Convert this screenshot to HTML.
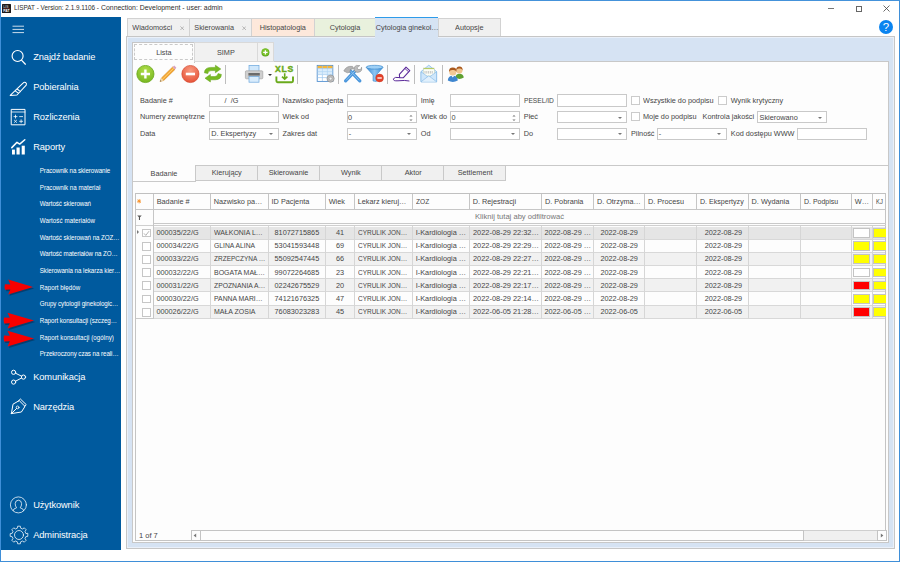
<!DOCTYPE html>
<html lang="pl">
<head>
<meta charset="utf-8">
<title>LISPAT</title>
<style>
*{box-sizing:border-box;margin:0;padding:0}
html,body{width:900px;height:562px;overflow:hidden;background:#fff}
body{font-family:"Liberation Sans",sans-serif;font-size:7.3px;color:#454545;position:relative}
div,span,svg{position:absolute}
.t{white-space:nowrap;line-height:10px;height:10px}
#side{left:1px;top:17px;width:120.4px;height:532.6px;background:#005a9e}
.mi{left:33.2px;color:#fff;font-size:9.3px;letter-spacing:-0.1px;line-height:12px;height:12px;white-space:nowrap}
.si{left:39.8px;color:#fff;font-size:6.2px;letter-spacing:-0.05px;line-height:8px;height:8px;white-space:nowrap}
.tab{top:18px;height:19px;border:1px solid #d2d2d2;background:#f0f0f0}
.tab .t{top:3.9px;font-size:7.3px}
.itab{top:42.4px;height:19.2px;border:1px solid #d9d9d9;background:#f1f1f1}
.lbl{font-size:7.3px;white-space:nowrap;line-height:10px;height:10px;color:#454545}
.inp{height:12.4px;border:1px solid #c9c9c9;background:#fff;font-size:7.3px}
.inp .t{left:1.2px;top:0.6px}
.dd:after{content:"";position:absolute;right:4.2px;top:4.8px;border:2.2px solid transparent;border-top:2.4px solid #777;border-bottom:none}
.cb{width:9px;height:9px;border:1px solid #cbcbcb;background:#fff}
.stab{top:165px;height:15.6px;border:1px solid #c9c9c9;border-left:none;background:#f0f0f0}
.c,.hc,.lbl,.inp .t,.tab .t,.itab .t,.stab .t,.si{transform:scaleY(1.07)}
.hl{height:1px;background:#c9c9c9}
.vl{width:1px;background:#c9c9c9}
.hc{top:197px;font-size:7.3px;white-space:nowrap;line-height:10px;height:10px}
.row{left:153.4px;width:732px;height:13.2px}
.c{font-size:7.3px;white-space:nowrap;line-height:10px;height:10px;top:1.6px}
.sw{width:17px;height:9.6px;border:1px solid #c4c4c4}
.sep{top:65px;width:1px;height:19px;background:#bdbdbd}
</style>
</head>
<body>
<div style="left:0;top:0;width:900px;height:562px;border:1px solid #3f8fd8;border-top:1.4px solid #4492da;border-bottom:1.6px solid #3f8fd8"></div>
<div style="left:2px;top:4px;width:9px;height:9px;background:#1d1a1b;border-radius:.5px"><span class="t" style="left:1.3px;top:1px;font-size:3.4px;line-height:4px;height:4px;color:#a8a8a8;font-weight:bold">LIS</span><span style="left:0.8px;top:4.4px;width:7.4px;height:0.5px;background:#4a2222"></span><span class="t" style="left:1.3px;top:4.9px;font-size:3.4px;line-height:4px;height:4px;color:#fff;font-weight:bold">PAT</span></div>
<div class="t" style="left:13.9px;top:3.1px;font-size:6.9px;color:#2e2e2e;transform:scale(0.925,1.06);transform-origin:0 50%">LISPAT - Version: 2.1.9.1106 -</div>
<div class="t" style="left:100.9px;top:3.1px;font-size:6.9px;color:#2e2e2e;transform:scale(1.002,1.06);transform-origin:0 50%">Connection: Development - user: admin</div>
<div style="left:828px;top:8px;width:6px;height:1px;background:#777"></div>
<div style="left:856px;top:5.5px;width:6px;height:6px;border:1px solid #666"></div>
<svg style="left:883px;top:5px" width="7" height="7" viewBox="0 0 7 7"><path d="M0.5 0.5L6.5 6.5M6.5 0.5L0.5 6.5" stroke="#444" stroke-width="0.8" fill="none"/></svg>
<div style="left:879px;top:20px;width:14px;height:14px;border-radius:7px;background:#0a84f0"><span class="t" style="left:0;width:14px;top:2px;text-align:center;color:#fff;font-size:11.5px">?</span></div>
<div id="side"></div>
<svg style="left:12px;top:25px" width="13" height="9" viewBox="0 0 13 9"><path d="M0.5 1.2H12M0.5 4.4H12M0.5 7.6H12" stroke="#fff" stroke-width="0.8" fill="none"/></svg>
<div class="mi" style="top:51.4px">Znajdź badanie</div>
<div class="mi" style="top:81.4px">Pobieralnia</div>
<div class="mi" style="top:111.4px">Rozliczenia</div>
<div class="mi" style="top:141.4px">Raporty</div>
<div class="mi" style="top:371.1px">Komunikacja</div>
<div class="mi" style="top:401.1px">Narzędzia</div>
<div class="mi" style="top:499.4px">Użytkownik</div>
<div class="mi" style="top:529.4px">Administracja</div>
<div class="si" style="top:166.9px">Pracownik na skierowanie</div>
<div class="si" style="top:183.6px;letter-spacing:-0.02px">Pracownik na materiał</div>
<div class="si" style="top:200.3px">Wartość skierowań</div>
<div class="si" style="top:216.9px;letter-spacing:0.06px">Wartość materiałów</div>
<div class="si" style="top:233.6px">Wartość skierowań na ZOZ…</div>
<div class="si" style="top:250.3px">Wartość materiałów na ZO…</div>
<div class="si" style="top:267.0px">Skierowania na lekarza kier…</div>
<div class="si" style="top:283.7px;letter-spacing:0.04px">Raport błędów</div>
<div class="si" style="top:300.3px">Grupy cytologii ginekologic…</div>
<div class="si" style="top:317.0px">Raport konsultacji (szczeg…</div>
<div class="si" style="top:333.7px;letter-spacing:0.03px">Raport konsultacji (ogólny)</div>
<div class="si" style="top:350.4px">Przekroczony czas na reali…</div>
<svg style="left:10px;top:48px" width="18" height="18" viewBox="0 0 18 18" ><circle cx="7.6" cy="8" r="5.5" stroke="#fff" fill="none" stroke-linecap="round" stroke-linejoin="round" stroke-width="1.15"/><path d="M11.7 12.4L15.4 16.2" stroke="#fff" fill="none" stroke-linecap="round" stroke-linejoin="round" stroke-width="1.25"/></svg>
<svg style="left:9px;top:80px" width="19" height="17" viewBox="0 0 19 17" ><path d="M1.2 15.4L8 15 17.2 5.2Q18 3.4 16.6 2.5 15.2 1.8 14 3.2L1.2 15.4ZM6.2 10.8L9.6 13.4M8.2 9L11.4 11.6" stroke="#fff" fill="none" stroke-linecap="round" stroke-linejoin="round" stroke-width="1.05"/></svg>
<svg style="left:10px;top:108px" width="17" height="18" viewBox="0 0 17 18" ><rect x="1.6" y="1.4" width="13.4" height="15.4" stroke="#fff" fill="none" stroke-linecap="round" stroke-linejoin="round" stroke-width="1"/><path d="M1.6 4H15M4 8.6H7M5.5 7.1V10.1M9.6 8.6H12.6M4.4 12.2L6.6 14.4M6.6 12.2L4.4 14.4M9.6 13.3H12.6M11.1 11.8V14.8" stroke="#fff" fill="none" stroke-linecap="round" stroke-linejoin="round" stroke-width="0.8"/></svg>
<svg style="left:10px;top:138px" width="17" height="18" viewBox="0 0 17 18" ><path d="M1.8 9.6L7 4.3 9.7 6.1 14.8 1.8" stroke="#fff" fill="none" stroke-linecap="round" stroke-linejoin="round" stroke-width="1.5"/><rect x="2" y="11.6" width="2.9" height="4.9" fill="#fff"/><rect x="6.5" y="9.5" width="3.2" height="7" fill="#fff"/><rect x="11.7" y="7.7" width="3.1" height="8.8" fill="#fff"/></svg>
<svg style="left:10px;top:368px" width="18" height="18" viewBox="0 0 18 18" ><circle cx="3.6" cy="4.3" r="2.1" stroke="#fff" fill="none" stroke-linecap="round" stroke-linejoin="round" stroke-width="1"/><circle cx="13.5" cy="9.1" r="2.1" stroke="#fff" fill="none" stroke-linecap="round" stroke-linejoin="round" stroke-width="1"/><circle cx="3.6" cy="14.1" r="2.1" stroke="#fff" fill="none" stroke-linecap="round" stroke-linejoin="round" stroke-width="1"/><path d="M5.5 5.2L11.6 8.2M5.5 13.2L11.6 10" stroke="#fff" fill="none" stroke-linecap="round" stroke-linejoin="round" stroke-width="1"/></svg>
<svg style="left:10px;top:397px" width="18" height="19" viewBox="0 0 18 19" ><path d="M1.4 16.6L3 7.2 9.2 3.6 15 9.4 11.4 15 1.4 16.6ZM1.6 16.4L6.6 11.4M8.4 4L10.4 2 16.2 7.6 14.6 9.4" stroke="#fff" fill="none" stroke-linecap="round" stroke-linejoin="round" stroke-width="1"/><circle cx="7.6" cy="10.4" r="1.4" stroke="#fff" fill="none" stroke-linecap="round" stroke-linejoin="round" stroke-width="0.8"/></svg>
<svg style="left:9px;top:495px" width="20" height="20" viewBox="0 0 20 20" ><circle cx="9.4" cy="9.9" r="8" stroke="#fff" fill="none" stroke-linecap="round" stroke-linejoin="round" stroke-width="0.75"/><path d="M4 15.6Q4.2 13.6 7.6 12.8 6.2 11.2 6.2 8.6 6.4 5.2 9.4 5.2 12.4 5.2 12.6 8.6 12.6 11.2 11.2 12.8 14.6 13.6 14.8 15.6" stroke="#fff" fill="none" stroke-linecap="round" stroke-linejoin="round" stroke-width="0.75"/></svg>
<svg style="left:8.8px;top:525px" width="20" height="20" viewBox="0 0 20 20" ><path d="M18.80 8.67 L18.80 11.33 L16.78 11.73 L16.02 13.57 L17.16 15.28 L15.28 17.16 L13.57 16.02 L11.73 16.78 L11.33 18.80 L8.67 18.80 L8.27 16.78 L6.43 16.02 L4.72 17.16 L2.84 15.28 L3.98 13.57 L3.22 11.73 L1.20 11.33 L1.20 8.67 L3.22 8.27 L3.98 6.43 L2.84 4.72 L4.72 2.84 L6.43 3.98 L8.27 3.22 L8.67 1.20 L11.33 1.20 L11.73 3.22 L13.57 3.98 L15.28 2.84 L17.16 4.72 L16.02 6.43 L16.78 8.27Z" stroke="#fff" fill="none" stroke-linecap="round" stroke-linejoin="round" stroke-width="0.75"/><circle cx="10" cy="10" r="4.5" stroke="#fff" fill="none" stroke-linecap="round" stroke-linejoin="round" stroke-width="0.75"/></svg>
<svg style="left:3.6px;top:279.3px;overflow:visible" width="30" height="16" viewBox="0 0 30 16"><g fill="#0a2a4a" opacity=".55" transform="translate(1.2 1.4)"><path d="M1 5.2Q0 8 1 10.8L6.4 10.6 4.2 15.4 29 8 4.2 0.6 6.4 5.4Z"/></g><g fill="#f70000"><path d="M1 5.2Q0 8 1 10.8L6.4 10.6 4.2 15.4 29 8 4.2 0.6 6.4 5.4Z"/></g></svg>
<svg style="left:2.8px;top:312.2px;overflow:visible" width="32.1" height="17.12" viewBox="0 0 30 16"><g fill="#0a2a4a" opacity=".55" transform="translate(1.2 1.4)"><path d="M1 5.2Q0 8 1 10.8L6.4 10.6 4.2 15.4 29 8 4.2 0.6 6.4 5.4Z"/></g><g fill="#f70000"><path d="M1 5.2Q0 8 1 10.8L6.4 10.6 4.2 15.4 29 8 4.2 0.6 6.4 5.4Z"/></g></svg>
<svg style="left:2.8px;top:329.6px;overflow:visible" width="32.1" height="17.12" viewBox="0 0 30 16"><g fill="#0a2a4a" opacity=".55" transform="translate(1.2 1.4)"><path d="M1 5.2Q0 8 1 10.8L6.4 10.6 4.2 15.4 29 8 4.2 0.6 6.4 5.4Z"/></g><g fill="#f70000"><path d="M1 5.2Q0 8 1 10.8L6.4 10.6 4.2 15.4 29 8 4.2 0.6 6.4 5.4Z"/></g></svg>
<div class="tab" style="left:127px;width:63px;background:#f0f0f0"><span class="t" style="left:4.3px">Wiadomości</span><svg style="left:51.5px;top:6.6px" width="4.4" height="4.4" viewBox="0 0 4.4 4.4"><path d="M0.4 0.4L4 4M4 0.4L0.4 4" stroke="#8a8a8a" stroke-width="0.55"/></svg></div>
<div class="tab" style="left:189px;width:63px;background:#f0f0f0"><span class="t" style="left:4.3px">Skierowania</span><svg style="left:51.5px;top:6.6px" width="4.4" height="4.4" viewBox="0 0 4.4 4.4"><path d="M0.4 0.4L4 4M4 0.4L0.4 4" stroke="#8a8a8a" stroke-width="0.55"/></svg></div>
<div class="tab" style="left:251px;width:63.5px;background:#fde8db"><span class="t" style="left:0;width:61.5px;text-align:center">Histopatologia</span></div>
<div class="tab" style="left:313.5px;width:63px;background:#e9f1dd"><span class="t" style="left:0;width:61px;text-align:center">Cytologia</span></div>
<div class="tab" style="left:437.5px;width:63.5px;background:#f0f0f0"><span class="t" style="left:0;width:61.5px;text-align:center">Autopsje</span></div>
<div style="left:126.4px;top:36px;width:768.2px;height:513.4px;border:1px solid #c6c6c6;background:#d6e3f3;box-shadow:inset 0 0 0 1px #eaf0f9"></div>
<div style="left:375px;top:17px;width:63px;height:21px;background:#d6e3f3;border-top:1.2px solid #2d9bea"><span class="t" style="left:0.8px;top:5px;font-size:7.3px">Cytologia ginekol…</span></div>
<div style="left:131.6px;top:61px;width:757px;height:482.4px;background:#fdfdfd;border:1px solid #c8c8c8"></div>
<div class="itab" style="left:132.4px;width:63px;background:#fdfdfd;height:20.2px;border-color:#c6c6c6;border-bottom:none"><div style="left:0.6px;top:0.4px;right:1px;bottom:2.2px;border:1px dashed #cacaca"></div><span class="t" style="left:0;width:61px;text-align:center;top:4.5px">Lista</span></div>
<div class="itab" style="left:194.4px;width:63.4px"><span class="t" style="left:0;width:61px;text-align:center;top:4.5px">SIMP</span></div>
<div class="itab" style="left:257.2px;width:17px"></div>
<svg style="left:261px;top:48px" width="9" height="9" viewBox="0 0 9 9" ><circle cx="4.4" cy="4.4" r="4" fill="#5aa51c"/><circle cx="4.4" cy="4" r="3.4" fill="#7cc22a"/><path d="M4.4 2.2V6.6M2.2 4.4H6.6" stroke="#fff" stroke-width="1.3"/></svg>
<svg style="left:136px;top:65px" width="19" height="19" viewBox="0 0 19 19" ><defs><radialGradient id="gg" cx=".5" cy=".3" r=".8"><stop offset="0" stop-color="#b2e04a"/><stop offset="1" stop-color="#6fb01c"/></radialGradient></defs><circle cx="9.4" cy="9" r="8.6" fill="url(#gg)" stroke="#6aa81a" stroke-width=".8"/><path d="M9.4 4.4V13.6M4.8 9H14" stroke="#fff" stroke-width="2.4"/></svg>
<svg style="left:158px;top:64px" width="20" height="20" viewBox="0 0 20 20" ><path d="M2 17.6L3.4 14 14.6 3 17 5.4 5.8 16.4Z" fill="#f7a833" stroke="#c98320" stroke-width=".5"/><path d="M14.6 3L16.2 1.6 18.4 3.8 17 5.4Z" fill="#d9a3c0"/><path d="M2 17.6L3.4 14 5.8 16.4Z" fill="#f1d9b0"/><path d="M2 17.6L2.6 16.2 3.4 17Z" fill="#444"/><path d="M4.6 15.2L15.8 4.2" stroke="#fbd07a" stroke-width=".9"/></svg>
<svg style="left:181px;top:65px" width="19" height="19" viewBox="0 0 19 19" ><defs><radialGradient id="rg" cx=".5" cy=".3" r=".8"><stop offset="0" stop-color="#f89a80"/><stop offset="1" stop-color="#e4492e"/></radialGradient></defs><circle cx="9.4" cy="9" r="8.6" fill="url(#rg)" stroke="#cf3a20" stroke-width=".6"/><path d="M4.8 9H14" stroke="#fff" stroke-width="2.6"/></svg>
<svg style="left:203px;top:64px" width="20" height="20" viewBox="0 0 20 20" ><g fill="#78bb23" stroke="#5f9c15" stroke-width=".5" stroke-linejoin="round"><path d="M1.4 8.8Q1.6 3.6 7.6 3.4H12.4V1.2L17.8 5 12.4 8.8V6.6H8Q5.2 6.8 4.8 9.6Z"/><path d="M18.4 10.4Q18.2 15.6 12.2 15.8H7.4V18L2 14.2 7.4 10.4V12.6H11.8Q14.6 12.4 15 9.6Z"/></g></svg>
<div class="sep" style="left:225px"></div>
<svg style="left:244px;top:64px" width="21" height="20" viewBox="0 0 21 20" ><rect x="5" y="1.4" width="10" height="7" fill="#cfe7fb" stroke="#6aa6dc" stroke-width=".7"/><rect x="1.4" y="6.8" width="17.4" height="8" rx="1" fill="#cfcfcf" stroke="#9a9a9a" stroke-width=".6"/><rect x="4.4" y="9" width="11.4" height="2.6" fill="#6b6b6b"/><rect x="5" y="12.6" width="10" height="5.6" fill="#d9ecfc" stroke="#6aa6dc" stroke-width=".7"/></svg>
<div style="left:267.8px;top:73.6px;width:0;height:0;border:2px solid transparent;border-top:2.4px solid #333;border-bottom:none"></div>
<div class="t" style="left:275px;top:65px;font-size:8.6px;font-weight:bold;color:#6aaa1c;-webkit-text-stroke:.45px #6aaa1c;letter-spacing:.7px;line-height:9px;height:9px">XLS</div>
<svg style="left:275px;top:73px" width="20" height="11" viewBox="0 0 20 11" ><path d="M1.4 3.6V8Q1.4 9.2 2.6 9.2H16.8Q18 9.2 18 8V3.6" stroke="#6aaa1c" stroke-width="1.9" fill="none"/><path d="M9.7 0.2V6M7 3.6L9.7 6.2 12.4 3.6" stroke="#6aaa1c" stroke-width="1.6" fill="none"/></svg>
<div class="sep" style="left:297px"></div>
<svg style="left:316px;top:64px" width="20" height="20" viewBox="0 0 20 20" ><rect x="1.2" y="1.4" width="15.6" height="16" fill="#fff" stroke="#4f8fd0" stroke-width=".9"/><rect x="1.6" y="1.8" width="14.8" height="2.6" fill="#f6b73c"/><path d="M1.6 4.6H16.4M1.6 7.6H16.4M1.6 10.6H16.4M1.6 13.6H16.4" stroke="#9cc6ee" stroke-width=".7"/><path d="M6.4 1.8V17M11.4 1.8V17" stroke="#9cc6ee" stroke-width=".7"/><rect x="1.8" y="4.8" width="14.4" height="6" fill="#bfe0f8" opacity=".6"/><circle cx="14.6" cy="14.6" r="3.6" fill="#bdbdbd" stroke="#8a8a8a" stroke-width=".6"/><circle cx="14.6" cy="14.6" r="1.4" fill="#f4f4f4" stroke="#8a8a8a" stroke-width=".4"/></svg>
<div class="sep" style="left:338.4px"></div>
<svg style="left:343px;top:64px" width="20" height="20" viewBox="0 0 20 20" ><path d="M2.6 16.8L12.6 6.4" stroke="#4a96dc" stroke-width="3.3" stroke-linecap="round"/><path d="M16.8 16.8L7 6.6" stroke="#4a96dc" stroke-width="3.3" stroke-linecap="round"/><path d="M3.4 16L12 7M16 16L7.6 7.2" stroke="#8cc2f0" stroke-width="1" stroke-linecap="round"/><path d="M0.8 7Q3.2 1.6 9.6 2.4L10.8 4.6 7.6 5.4 6.8 8.2 4.4 8.8Z" fill="#b4b4b4" stroke="#808080" stroke-width=".5"/><path d="M11 5.6Q10.4 2.6 13.4 1.4L16.8 1.6 14.2 3.6 14.8 5.6 17.8 5.4 18.6 3.2Q19.6 6.6 16.8 8 13.8 9 12 7.4Z" fill="#bdbdbd" stroke="#808080" stroke-width=".5"/></svg>
<svg style="left:365px;top:64px" width="20" height="20" viewBox="0 0 20 20" ><defs><linearGradient id="fg" x1="0" y1="0" x2="1" y2="0"><stop offset="0" stop-color="#3c8fd6"/><stop offset=".5" stop-color="#8cc4f2"/><stop offset="1" stop-color="#3c8fd6"/></linearGradient></defs><path d="M1.2 3.4L8 11V17L11.4 17.6V11L18 3.4Z" fill="url(#fg)" stroke="#2f7fc6" stroke-width=".5"/><ellipse cx="9.6" cy="3.2" rx="8.4" ry="1.9" fill="#9ed0f6" stroke="#2f7fc6" stroke-width=".6"/><circle cx="14.6" cy="14" r="3.9" fill="#e4412a" stroke="#c5341f" stroke-width=".4"/><path d="M12.4 14H16.8" stroke="#fff" stroke-width="1.3"/></svg>
<div class="sep" style="left:387.2px"></div>
<svg style="left:392px;top:65px" width="20" height="19" viewBox="0 0 20 19" ><path d="M7.4 9.4L14 2.2 17.8 5.6 11.2 12.8 7.6 12.6Z" fill="none" stroke="#5b2a9a" stroke-width="1.1" stroke-linejoin="round"/><path d="M13 3.6L16.6 6.8" stroke="#5b2a9a" stroke-width=".9"/><path d="M7.6 12.6Q2.6 11.6 1.4 13.8 0.8 16.2 6 15.8 13 15 17.4 16" fill="none" stroke="#5b2a9a" stroke-width="1"/></svg>
<div class="sep" style="left:414.4px"></div>
<svg style="left:420px;top:64px" width="18" height="20" viewBox="0 0 18 20" ><path d="M1 7.6L8.8 1.2 16.6 7.6V17.8H1Z" fill="#d4eafb" stroke="#7db5e4" stroke-width=".7"/><rect x="3.4" y="4" width="10.8" height="8" fill="#fbfdf6" stroke="#b9c8a6" stroke-width=".4"/><path d="M3.6 4.6H14" stroke="#a9c34a" stroke-width=".9"/><path d="M5 7V9.6M6.8 7V9.6M8.6 7V9.6M10.4 7V9.6M12.2 7V9.6" stroke="#b8b8b8" stroke-width=".8"/><path d="M1 7.8L8.8 13.4 16.6 7.8V17.8H1Z" fill="#cfe7fb" stroke="#7db5e4" stroke-width=".6"/><path d="M1 17.8L8.8 11.8 16.6 17.8" fill="#e1f0fc" stroke="#7db5e4" stroke-width=".6"/></svg>
<div class="sep" style="left:441.6px"></div>
<svg style="left:447px;top:65px" width="18" height="18" viewBox="0 0 18 18" ><path d="M8.4 12.6Q8.6 8.8 12.4 8.8 16.4 8.8 16.8 12.6Q14.6 14 12.6 14 10.4 14 8.4 12.6Z" fill="#5fa032"/><circle cx="12.4" cy="5.4" r="3.1" fill="#f0c48e"/><path d="M9.2 5.4Q9 1.6 12.4 1.6 15.8 1.6 15.6 5.4 14.6 3.2 12.4 3.6 10.2 3.2 9.2 5.4Z" fill="#a9581c"/><path d="M0.8 15.6Q1 10.8 5.8 10.8 10.6 10.8 10.8 15.6 8.2 17 5.8 17 3.4 17 0.8 15.6Z" fill="#3f86cf"/><circle cx="5.8" cy="7" r="3.6" fill="#f3c995"/><path d="M2 7Q1.8 2.6 5.8 2.6 9.8 2.6 9.6 7 8.6 4.6 5.8 5 3 4.6 2 7Z" fill="#a9581c"/><path d="M4.4 10.8L5.8 12.6 7.2 10.8Z" fill="#fff"/></svg>
<div class="lbl" style="left:140px;top:95.8px">Badanie #</div>
<div class="inp" style="left:208.6px;top:94.4px;width:70px"><span class="t" style="left:15px">/&nbsp;&nbsp;/G</span></div>
<div class="lbl" style="left:140px;top:112.4px">Numery zewnętrzne</div>
<div class="inp" style="left:208.6px;top:111px;width:70px"></div>
<div class="lbl" style="left:140px;top:129px">Data</div>
<div class="inp dd" style="left:208.6px;top:127.6px;width:70px"><span class="t" style="left:1.6px">D. Ekspertyzy</span></div>
<div class="lbl" style="left:282.6px;top:95.8px">Nazwisko pacjenta</div>
<div class="inp" style="left:346.6px;top:94.4px;width:70px"></div>
<div class="lbl" style="left:282.6px;top:112.4px">Wiek od</div>
<div class="inp" style="left:346.6px;top:111px;width:70px"><span class="t" style="left:0.4px">0</span><svg style="right:3px;top:1.6px" width="4" height="8" viewBox="0 0 4 8"><path d="M0.4 2.6L2 1 3.6 2.6ZM0.4 5.4L2 7 3.6 5.4Z" fill="#777"/></svg></div>
<div class="lbl" style="left:282.6px;top:129px">Zakres dat</div>
<div class="inp dd" style="left:346.6px;top:127.6px;width:70px"><span class="t" style="left:1.2px">-</span></div>
<div class="lbl" style="left:420.8px;top:95.8px">Imię</div>
<div class="inp" style="left:450.2px;top:94.4px;width:69.8px"></div>
<div class="lbl" style="left:420.8px;top:112.4px">Wiek do</div>
<div class="inp" style="left:450.2px;top:111px;width:69.8px"><span class="t" style="left:0.4px">0</span><svg style="right:3px;top:1.6px" width="4" height="8" viewBox="0 0 4 8"><path d="M0.4 2.6L2 1 3.6 2.6ZM0.4 5.4L2 7 3.6 5.4Z" fill="#777"/></svg></div>
<div class="lbl" style="left:420.8px;top:129px">Od</div>
<div class="inp dd" style="left:450.2px;top:127.6px;width:69.8px"></div>
<div class="lbl" style="left:523.8px;top:95.8px;transform:scale(0.910,1.07);transform-origin:0 50%">PESEL/ID</div>
<div class="inp" style="left:557.2px;top:94.4px;width:69.8px"></div>
<div class="lbl" style="left:523.8px;top:112.4px">Płeć</div>
<div class="inp dd" style="left:557.2px;top:111px;width:69.8px"></div>
<div class="lbl" style="left:523.8px;top:129px">Do</div>
<div class="inp dd" style="left:557.2px;top:127.6px;width:69.8px"></div>
<div class="cb" style="left:631px;top:95.6px"></div>
<div class="lbl" style="left:643px;top:95.8px">Wszystkie do podpisu</div>
<div class="cb" style="left:718.2px;top:95.6px"></div>
<div class="lbl" style="left:730.8px;top:95.8px">Wynik krytyczny</div>
<div class="cb" style="left:631px;top:112.2px"></div>
<div class="lbl" style="left:643px;top:112.4px">Moje do podpisu</div>
<div class="lbl" style="left:702.6px;top:112.4px">Kontrola jakości</div>
<div class="inp dd" style="left:757.4px;top:111px;width:69.6px"><span class="t">Skierowano</span></div>
<div class="lbl" style="left:631px;top:129px">Pilność</div>
<div class="inp dd" style="left:656.6px;top:127.6px;width:70px"><span class="t" style="left:1.2px">-</span></div>
<div class="lbl" style="left:730.8px;top:129px">Kod dostępu WWW</div>
<div class="inp" style="left:797.4px;top:127.6px;width:69.2px"></div>
<div class="hl" style="left:195px;top:165px;width:693px"></div>
<div class="hl" style="left:132.6px;top:180.8px;width:63.4px"></div>
<div class="vl" style="left:195px;top:165px;height:16.6px"></div>
<div class="t" style="left:133px;width:62px;text-align:center;top:168.6px;font-size:7.3px;transform:scaleY(1.07)">Badanie</div>
<div class="stab" style="left:196px;width:61.5px"><span class="t" style="left:0;width:61.5px;text-align:center;top:2.4px;font-size:7.3px">Kierujący</span></div>
<div class="stab" style="left:257.5px;width:62px"><span class="t" style="left:0;width:62px;text-align:center;top:2.4px;font-size:7.3px">Skierowanie</span></div>
<div class="stab" style="left:319.5px;width:62.7px"><span class="t" style="left:0;width:62.7px;text-align:center;top:2.4px;font-size:7.3px">Wynik</span></div>
<div class="stab" style="left:382.2px;width:62px"><span class="t" style="left:0;width:62px;text-align:center;top:2.4px;font-size:7.3px">Aktor</span></div>
<div class="stab" style="left:444.2px;width:61.8px"><span class="t" style="left:0;width:61.8px;text-align:center;top:2.4px;font-size:7.3px">Settlement</span></div>
<div style="left:135px;top:192.8px;width:751.4px;height:348.2px;border:1px solid #c4c4c4;border-top:1.4px solid #c0c0c0;background:#fdfdfd"></div>
<div class="hl" style="left:136px;top:209px;width:750px;background:#c6c6c6"></div>
<div class="hl" style="left:154px;top:223px;width:732px;background:#c9c9c9"></div>
<div class="hl" style="left:136px;top:225.4px;width:750px;background:#cfcfcf"></div>
<div class="row" style="top:226.50px;background:#e5e5e5;border-bottom:1px solid #d8d8d8"><span class="c" style="left:3px">000035/22/G</span><span class="c" style="left:60.6px;transform:scale(0.951,1.07);transform-origin:0 50%">WAŁKONIA L…</span><span class="c" style="left:115px;width:57px;text-align:center">81072715865</span><span class="c" style="left:172.1px;width:29px;text-align:center">41</span><span class="c" style="left:204.4px;transform:scale(0.886,1.07);transform-origin:0 50%">CYRULIK JON…</span><span class="c" style="left:262.4px">I-Kardiologia …</span><span class="c" style="left:319.8px;transform:scale(1.015,1.07);transform-origin:0 50%">2022-08-29 22:32…</span><span class="c" style="left:391px">2022-08-29 …</span><span class="c" style="left:440px;width:51.4px;text-align:center">2022-08-29</span><span class="c" style="left:544px;width:52px;text-align:center">2022-08-29</span><span class="sw" style="left:700px;top:1.6px;background:#fff"></span><span class="sw" style="left:720px;top:1.6px;width:12.6px;border-right:none;background:#ff0"></span></div>
<div class="cb" style="left:142.2px;top:228.70px;width:8.8px;height:8.8px;border-color:#c6c6c6"><svg style="left:0;top:0" width="7" height="7" viewBox="0 0 7 7"><path d="M1 3.4L2.8 5.4 6 1.2" stroke="#9a9a9a" stroke-width=".75" fill="none"/></svg></div>
<div class="row" style="top:239.68px;background:#fdfdfd;border-bottom:1px solid #d8d8d8"><span class="c" style="left:3px">000034/22/G</span><span class="c" style="left:60.6px;transform:scale(0.929,1.07);transform-origin:0 50%">GLINA ALINA</span><span class="c" style="left:115px;width:57px;text-align:center">53041593448</span><span class="c" style="left:172.1px;width:29px;text-align:center">69</span><span class="c" style="left:204.4px;transform:scale(0.886,1.07);transform-origin:0 50%">CYRULIK JON…</span><span class="c" style="left:262.4px">I-Kardiologia …</span><span class="c" style="left:319.8px;transform:scale(1.015,1.07);transform-origin:0 50%">2022-08-29 22:29…</span><span class="c" style="left:391px">2022-08-29 …</span><span class="c" style="left:440px;width:51.4px;text-align:center">2022-08-29</span><span class="c" style="left:544px;width:52px;text-align:center">2022-08-29</span><span class="sw" style="left:700px;top:1.6px;background:#ff0"></span><span class="sw" style="left:720px;top:1.6px;width:12.6px;border-right:none;background:#ff0"></span></div>
<div class="cb" style="left:142.2px;top:241.88px;width:8.8px;height:8.8px;border-color:#c6c6c6"></div>
<div class="row" style="top:252.86px;background:#f1f1f1;border-bottom:1px solid #d8d8d8"><span class="c" style="left:3px">000033/22/G</span><span class="c" style="left:60.6px;transform:scale(0.891,1.07);transform-origin:0 50%">ZRZEPCZYNA …</span><span class="c" style="left:115px;width:57px;text-align:center">55092547445</span><span class="c" style="left:172.1px;width:29px;text-align:center">66</span><span class="c" style="left:204.4px;transform:scale(0.886,1.07);transform-origin:0 50%">CYRULIK JON…</span><span class="c" style="left:262.4px">I-Kardiologia …</span><span class="c" style="left:319.8px;transform:scale(1.015,1.07);transform-origin:0 50%">2022-08-29 22:27…</span><span class="c" style="left:391px">2022-08-29 …</span><span class="c" style="left:440px;width:51.4px;text-align:center">2022-08-29</span><span class="c" style="left:544px;width:52px;text-align:center">2022-08-29</span><span class="sw" style="left:700px;top:1.6px;background:#ff0"></span><span class="sw" style="left:720px;top:1.6px;width:12.6px;border-right:none;background:#ff0"></span></div>
<div class="cb" style="left:142.2px;top:255.06px;width:8.8px;height:8.8px;border-color:#c6c6c6"></div>
<div class="row" style="top:266.04px;background:#fdfdfd;border-bottom:1px solid #d8d8d8"><span class="c" style="left:3px">000032/22/G</span><span class="c" style="left:60.6px;transform:scale(0.956,1.07);transform-origin:0 50%">BOGATA MAŁ…</span><span class="c" style="left:115px;width:57px;text-align:center">99072264685</span><span class="c" style="left:172.1px;width:29px;text-align:center">23</span><span class="c" style="left:204.4px;transform:scale(0.886,1.07);transform-origin:0 50%">CYRULIK JON…</span><span class="c" style="left:262.4px">I-Kardiologia …</span><span class="c" style="left:319.8px;transform:scale(1.015,1.07);transform-origin:0 50%">2022-08-29 22:21…</span><span class="c" style="left:391px">2022-08-29 …</span><span class="c" style="left:440px;width:51.4px;text-align:center">2022-08-29</span><span class="c" style="left:544px;width:52px;text-align:center">2022-08-29</span><span class="sw" style="left:700px;top:1.6px;background:#fff"></span><span class="sw" style="left:720px;top:1.6px;width:12.6px;border-right:none;background:#ff0"></span></div>
<div class="cb" style="left:142.2px;top:268.24px;width:8.8px;height:8.8px;border-color:#c6c6c6"></div>
<div class="row" style="top:279.22px;background:#f1f1f1;border-bottom:1px solid #d8d8d8"><span class="c" style="left:3px">000031/22/G</span><span class="c" style="left:60.6px;transform:scale(0.930,1.07);transform-origin:0 50%">ZPOZNANIA A…</span><span class="c" style="left:115px;width:57px;text-align:center">02242675529</span><span class="c" style="left:172.1px;width:29px;text-align:center">20</span><span class="c" style="left:204.4px;transform:scale(0.886,1.07);transform-origin:0 50%">CYRULIK JON…</span><span class="c" style="left:262.4px">I-Kardiologia …</span><span class="c" style="left:319.8px;transform:scale(1.015,1.07);transform-origin:0 50%">2022-08-29 22:17…</span><span class="c" style="left:391px">2022-08-29 …</span><span class="c" style="left:440px;width:51.4px;text-align:center">2022-08-29</span><span class="c" style="left:544px;width:52px;text-align:center">2022-08-29</span><span class="sw" style="left:700px;top:1.6px;background:#f00"></span><span class="sw" style="left:720px;top:1.6px;width:12.6px;border-right:none;background:#ff0"></span></div>
<div class="cb" style="left:142.2px;top:281.42px;width:8.8px;height:8.8px;border-color:#c6c6c6"></div>
<div class="row" style="top:292.40px;background:#fdfdfd;border-bottom:1px solid #d8d8d8"><span class="c" style="left:3px">000030/22/G</span><span class="c" style="left:60.6px;transform:scale(0.939,1.07);transform-origin:0 50%">PANNA MARI…</span><span class="c" style="left:115px;width:57px;text-align:center">74121676325</span><span class="c" style="left:172.1px;width:29px;text-align:center">47</span><span class="c" style="left:204.4px;transform:scale(0.886,1.07);transform-origin:0 50%">CYRULIK JON…</span><span class="c" style="left:262.4px">I-Kardiologia …</span><span class="c" style="left:319.8px;transform:scale(1.015,1.07);transform-origin:0 50%">2022-08-29 22:14…</span><span class="c" style="left:391px">2022-08-29 …</span><span class="c" style="left:440px;width:51.4px;text-align:center">2022-08-29</span><span class="c" style="left:544px;width:52px;text-align:center">2022-08-29</span><span class="sw" style="left:700px;top:1.6px;background:#ff0"></span><span class="sw" style="left:720px;top:1.6px;width:12.6px;border-right:none;background:#ff0"></span></div>
<div class="cb" style="left:142.2px;top:294.60px;width:8.8px;height:8.8px;border-color:#c6c6c6"></div>
<div class="row" style="top:305.58px;background:#f1f1f1;border-bottom:1px solid #d8d8d8"><span class="c" style="left:3px">000026/22/G</span><span class="c" style="left:60.6px;transform:scale(0.956,1.07);transform-origin:0 50%">MAŁA ZOSIA</span><span class="c" style="left:115px;width:57px;text-align:center">76083023283</span><span class="c" style="left:172.1px;width:29px;text-align:center">45</span><span class="c" style="left:204.4px;transform:scale(0.886,1.07);transform-origin:0 50%">CYRULIK JON…</span><span class="c" style="left:262.4px">I-Kardiologia …</span><span class="c" style="left:319.8px;transform:scale(1.015,1.07);transform-origin:0 50%">2022-06-05 21:28…</span><span class="c" style="left:391px">2022-06-05 …</span><span class="c" style="left:440px;width:51.4px;text-align:center">2022-06-05</span><span class="c" style="left:544px;width:52px;text-align:center">2022-06-05</span><span class="sw" style="left:700px;top:1.6px;background:#f00"></span><span class="sw" style="left:720px;top:1.6px;width:12.6px;border-right:none;background:#ff0"></span></div>
<div class="cb" style="left:142.2px;top:307.78px;width:8.8px;height:8.8px;border-color:#c6c6c6"></div>
<div style="left:137.2px;top:230.2px;width:0;height:0;border:2.2px solid transparent;border-left:2.6px solid #777;border-right:none"></div>
<div class="vl" style="left:152.7px;top:193.6px;height:125.16px;background:#c6c6c6"></div>
<div class="vl" style="left:209.7px;top:193.6px;height:15.6px;background:#c6c6c6"></div>
<div class="vl" style="left:209.7px;top:226px;height:92.76px;background:#d6d6d6"></div>
<div class="vl" style="left:267.6px;top:193.6px;height:15.6px;background:#c6c6c6"></div>
<div class="vl" style="left:267.6px;top:226px;height:92.76px;background:#d6d6d6"></div>
<div class="vl" style="left:324.7px;top:193.6px;height:15.6px;background:#c6c6c6"></div>
<div class="vl" style="left:324.7px;top:226px;height:92.76px;background:#d6d6d6"></div>
<div class="vl" style="left:353.7px;top:193.6px;height:15.6px;background:#c6c6c6"></div>
<div class="vl" style="left:353.7px;top:226px;height:92.76px;background:#d6d6d6"></div>
<div class="vl" style="left:411.7px;top:193.6px;height:15.6px;background:#c6c6c6"></div>
<div class="vl" style="left:411.7px;top:226px;height:92.76px;background:#d6d6d6"></div>
<div class="vl" style="left:468.7px;top:193.6px;height:15.6px;background:#c6c6c6"></div>
<div class="vl" style="left:468.7px;top:226px;height:92.76px;background:#d6d6d6"></div>
<div class="vl" style="left:540.9px;top:193.6px;height:15.6px;background:#c6c6c6"></div>
<div class="vl" style="left:540.9px;top:226px;height:92.76px;background:#d6d6d6"></div>
<div class="vl" style="left:592.6px;top:193.6px;height:15.6px;background:#c6c6c6"></div>
<div class="vl" style="left:592.6px;top:226px;height:92.76px;background:#d6d6d6"></div>
<div class="vl" style="left:643.9px;top:193.6px;height:15.6px;background:#c6c6c6"></div>
<div class="vl" style="left:643.9px;top:226px;height:92.76px;background:#d6d6d6"></div>
<div class="vl" style="left:695.6px;top:193.6px;height:15.6px;background:#c6c6c6"></div>
<div class="vl" style="left:695.6px;top:226px;height:92.76px;background:#d6d6d6"></div>
<div class="vl" style="left:747.6px;top:193.6px;height:15.6px;background:#c6c6c6"></div>
<div class="vl" style="left:747.6px;top:226px;height:92.76px;background:#d6d6d6"></div>
<div class="vl" style="left:799.6px;top:193.6px;height:15.6px;background:#c6c6c6"></div>
<div class="vl" style="left:799.6px;top:226px;height:92.76px;background:#d6d6d6"></div>
<div class="vl" style="left:850.8px;top:193.6px;height:15.6px;background:#c6c6c6"></div>
<div class="vl" style="left:850.8px;top:226px;height:92.76px;background:#d6d6d6"></div>
<div class="vl" style="left:871.7px;top:193.6px;height:15.6px;background:#c6c6c6"></div>
<div class="vl" style="left:871.7px;top:226px;height:92.76px;background:#d6d6d6"></div>
<div class="hl" style="left:136px;top:318.36px;width:18px;background:#c9c9c9"></div>
<div class="hc" style="left:156.7px">Badanie #</div>
<div class="hc" style="left:213.7px">Nazwisko pa…</div>
<div class="hc" style="left:271.6px">ID Pacjenta</div>
<div class="hc" style="left:328.7px">Wiek</div>
<div class="hc" style="left:357.7px">Lekarz kieruj…</div>
<div class="hc" style="left:415.7px;transform:scale(0.904,1.07);transform-origin:0 50%">ZOZ</div>
<div class="hc" style="left:472.7px">D. Rejestracji</div>
<div class="hc" style="left:544.9px">D. Pobrania</div>
<div class="hc" style="left:596.6px;transform:scale(0.991,1.07);transform-origin:0 50%">D. Otrzyma…</div>
<div class="hc" style="left:647.9px">D. Procesu</div>
<div class="hc" style="left:699.6px;transform:scale(0.971,1.07);transform-origin:0 50%">D. Ekspertyzy</div>
<div class="hc" style="left:751.6px">D. Wydania</div>
<div class="hc" style="left:803.6px;transform:scale(0.958,1.07);transform-origin:0 50%">D. Podpisu</div>
<div class="hc" style="left:854.8px">W…</div>
<div class="hc" style="left:875.7px;transform:scale(0.799,1.07);transform-origin:0 50%">KJ</div>
<svg style="left:136.8px;top:199.2px" width="4.4" height="4.4" viewBox="0 0 5 5"><path d="M2.5 0V5M0 2.5H5M0.7 0.7L4.3 4.3M4.3 0.7L0.7 4.3" stroke="#f68b1f" stroke-width=".9"/></svg>
<svg style="left:136.8px;top:215px" width="5.4" height="5.4" viewBox="0 0 5 5"><path d="M0.2 0.4H4.4L2.8 2.2V4.6H1.8V2.2Z" fill="#555"/></svg>
<div class="t" style="left:474.6px;top:211.6px;font-size:7.3px;color:#777;transform:scale(1.041,1.07);transform-origin:0 50%">Kliknij tutaj aby odfiltrować</div>
<div class="t" style="left:139.2px;top:531px;font-size:7.3px;transform:scale(1.029,1.07);transform-origin:0 50%">1 of 7</div>
<div style="left:190.6px;top:529.6px;width:696px;height:11.6px;background:#f0f0f0;border:1px solid #cfcfcf"></div>
<div style="left:190.6px;top:529.6px;width:10px;height:11.6px;background:#fdfdfd;border:1px solid #c4c4c4"></div>
<svg style="left:193.4px;top:533px" width="4" height="5" viewBox="0 0 4 5"><path d="M3.2 0.4V4.6L0.6 2.5Z" fill="#777"/></svg>
<div style="left:200px;top:529.6px;width:603.6px;height:11.6px;background:#fdfdfd;border:1px solid #c4c4c4"></div>
<div style="left:876.6px;top:529.6px;width:10px;height:11.6px;background:#fdfdfd;border:1px solid #c4c4c4"></div>
<svg style="left:879.8px;top:533px" width="4" height="5" viewBox="0 0 4 5"><path d="M0.8 0.4V4.6L3.4 2.5Z" fill="#777"/></svg>
</body>
</html>
